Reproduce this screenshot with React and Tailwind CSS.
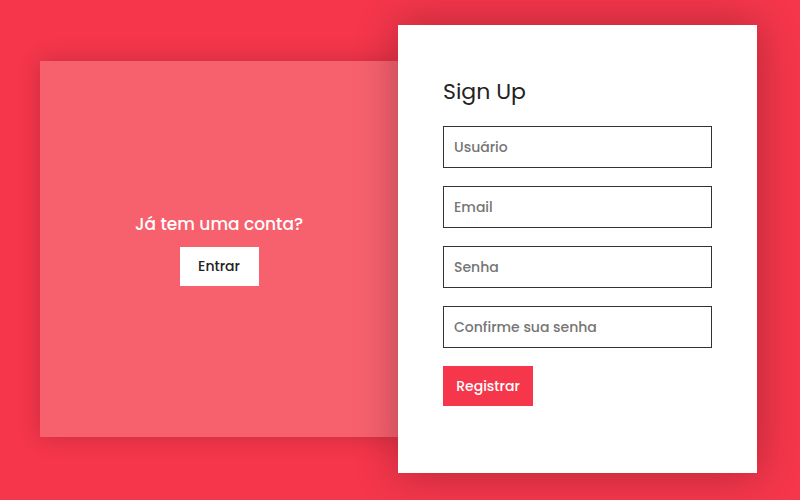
import React from "react";

const fields = ["Usuário", "Email", "Senha", "Confirme sua senha"];

export default function App() {
  return (
    <div
      className="w-[800px] h-[500px] bg-[#f5364b] overflow-hidden"
      style={{ fontFamily: "Poppins, 'Open Sans', sans-serif" }}
    >
      <div className="flex items-center h-[498px] pl-[40px]">
        {/* LEFT PANEL */}
        <div className="w-[358px] h-[376px] bg-[#f7616e] shadow-[0_0_22px_rgba(0,0,0,0.18)] flex flex-col items-center justify-center">
          <p className="text-white text-[17px] leading-[24px] font-medium">Já tem uma conta?</p>
          <button className="mt-[11px] w-[79px] h-[39px] bg-white text-[#222] text-[14px] font-medium">
            Entrar
          </button>
        </div>

        {/* SIGN UP CARD */}
        <div className="relative z-10 w-[359px] h-[448px] bg-white shadow-[0_0_40px_rgba(0,0,0,0.28)] pt-[52px] pl-[45px]">
          <h1 className="text-[22px] leading-[30px] text-[#222]">Sign Up</h1>
          <div className="mt-[19px] flex flex-col gap-[18px]">
            {fields.map((f) => (
              <input
                key={f}
                placeholder={f}
                className="w-[269px] h-[42px] border border-[#333] px-[10px] text-[14px] font-medium placeholder:text-[#757575] outline-none"
              />
            ))}
          </div>
          <button className="mt-[18px] w-[90px] h-[40px] bg-[#f5364b] text-white text-[14px] font-medium">
            Registrar
          </button>
        </div>
      </div>
    </div>
  );
}
